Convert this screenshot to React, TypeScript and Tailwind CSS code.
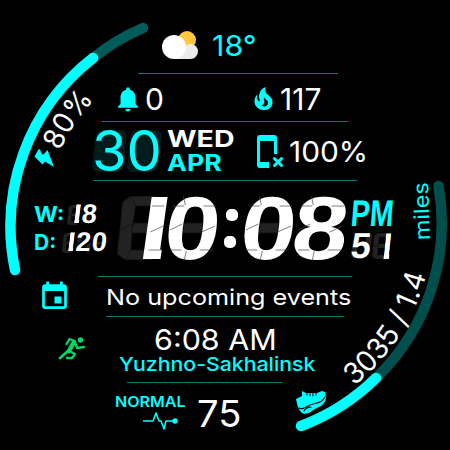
import type { ReactNode } from 'react'
import { MdEvent, MdNotifications } from 'react-icons/md'

// polygons of one display cell, on a 54x64 grid
const segments: Record<string, string> = {
  a: '14,0 43,0 40,10 17,10',
  b: '43,0 54,6 51,31 36,37 39,10',
  c: '36,37 51,31 48,57 38,64 33,54',
  d: '8,54 34,54 37,64 9,64',
  e: '3,34 17,28 15,54 9,64 0,58',
  f: '6,6 15,0 20,10 17,28 3,34',
  g: '18,27 37,27 36,37 16,37',
}

function Cell({ digit, off, className, text, lines }: { digit: string; off: string; className: string; text: string; lines?: boolean }) {
  return (
    <span className={`relative flex shrink-0 items-center justify-center ${className}`}>
      <svg className="absolute inset-0 h-full w-full" viewBox="0 0 54 64" preserveAspectRatio="none">
        {off.split('').map(s => <polygon key={s} points={segments[s]} fill="#222" stroke="#111" strokeWidth="0.8" />)}
      </svg>
      <span className={`relative leading-none font-bold ${text}`}>{digit}</span>
      {lines && (
        <svg className="absolute inset-0 h-full w-full" viewBox="0 0 54 64" preserveAspectRatio="none" fill="none" stroke="#444" strokeWidth="0.7">
          {digit !== '1' && <path d="M17 0l2 9M3 34l13-6M3 54h12M18 64l2-9M6 10h12" />}
          <path d="M38 10h13M36 36l14-6M34 54h14" />
        </svg>
      )}
    </span>
  )
}

function Row({ className, children }: { className: string; children: ReactNode }) {
  return <div className={`flex shrink-0 ${className}`}>{children}</div>
}

function Rule({ className }: { className: string }) {
  return <div className={`h-px shrink-0 bg-[#007c7c] ${className}`} />
}

function Flame() {
  return (
    <svg width="31" height="31" viewBox="0 0 24 24" className="shrink-0 fill-[#0ff]">
      <path d="M17.66 11.2c-.23-.3-.51-.56-.77-.82-.67-.6-1.43-1.03-2.070-1.660C13.330 7.260 13 4.850 13.950 3c-.95.23-1.780.75-2.490 1.320-2.590 2.080-3.610 5.750-2.390 8.900.04.1.08.2.08.33 0 .22-.15.42-.35.5-.23.1-.47.04-.66-.12a.58.58 0 0 1-.14-.17c-1.130-1.430-1.310-3.480-.55-5.120C5.780 10 4.870 12.300 5 14.470c.06.5.12 1 .29 1.500.14.6.41 1.200.71 1.730 1.080 1.730 2.950 2.970 4.960 3.220 2.140.27 4.430-.12 6.070-1.600 1.830-1.660 2.470-4.320 1.530-6.600l-.13-.26c-.21-.46-.77-1.260-.77-1.260m-3.160 6.300c-.28.24-.74.5-1.100.6-1.120.4-2.240-.16-2.900-.82 1.190-.28 1.900-1.160 2.110-2.050.17-.8-.15-1.460-.28-2.230-.12-.74-.1-1.370.17-2.060.19.38.39.76.63 1.060.77 1 1.980 1.440 2.240 2.800.04.14.06.28.06.43.03.82-.33 1.720-.93 2.270" />
    </svg>
  )
}

function Rings() {
  return (
    <svg className="pointer-events-none absolute inset-0" width="450" height="450" fill="none" strokeWidth="10.5" strokeLinecap="round">
      <path d="M93 58A213.5 213.5 0 0 1 143 28" stroke="#005c5a" />
      <path d="M15 270A213.5 213.5 0 0 1 93 58" stroke="#0ff" />
      <path d="M438.5 186A215.5 215.5 0 0 1 376 378" stroke="#004f4d" />
      <path d="M376 378A215.5 215.5 0 0 1 301 426" stroke="#0ff" />
      <path id="battery" d="M60 151A182 182 0 0 1 115 81" />
      <path id="steps" d="M354 386A207 207 0 0 0 432 240" />
      <g stroke="none" fontFamily="Inter, sans-serif" fill="#fff">
        <text fontSize="29"><textPath href="#battery" textLength="62" lengthAdjust="spacingAndGlyphs">80%</textPath></text>
        <text fontSize="29"><textPath href="#steps" textLength="135" lengthAdjust="spacingAndGlyphs">3035 / 1.4</textPath></text>
        <text transform="translate(430 240) rotate(-92)" fontSize="21" fill="#0ff" textLength="58" lengthAdjust="spacingAndGlyphs">miles</text>
      </g>
      <path d="M39 148.500l3.500 6 1.500-.5 3.500-4L54 167l-9-5.500-2.500 3-8-8z" fill="#0ff" stroke="none" />
      <g transform="translate(296 389)" stroke="none">
        <path d="M6 2l4 2 11 0 5-2 3 1 1 6c-1 9-10 9-14 13-4 3-9 4-11 1-3-3-4-8-5-13l6-3z" fill="#0ff" />
        <path d="M3 19c3 2 6 0 9-2 6-4 13-1 17-9M8 22c2-3 4-4 7-4" stroke="#000" strokeWidth="1.1" />
        <path d="M11 2v4m3-3v4m3-4v4m3-5v4" stroke="#000" strokeWidth="1" />
      </g>
    </svg>
  )
}

// keeps only the upright stem of the 1, as the display shows it
const one = '-skew-x-6 [clip-path:polygon(43%_0,69%_0,69%_100%,43%_100%)]'

export default function App() {
  return (
    <main className="relative flex h-[450px] w-[450px] flex-col overflow-hidden bg-black font-[Inter,sans-serif] leading-none text-white">
      <Row className="h-[73px] pt-[31px] pl-[161px]">
        <svg width="38" height="30" className="shrink-0">
          <circle cx="26" cy="9" r="9" fill="#ffc83d" />
          <circle cx="29.500" cy="20.500" r="7.500" fill="#ececec" />
          <path d="M13 18h16v10H13z" fill="#ececec" />
          <circle cx="13" cy="16" r="12" fill="#fff" />
        </svg>
        <span className="ml-[13px] h-max w-max origin-left scale-x-[1.05] text-[29px] text-[#0ff]">18°</span>
      </Row>
      <Rule className="ml-[138px] w-[200px]" />

      <Row className="h-[47px] items-center pt-[2px] pl-[113px]">
        <MdNotifications size={30} className="shrink-0 text-[#0ff]" />
        <span className="ml-[2px] w-[103px] text-[30px]">0</span>
        <Flame />
        <span className="ml-px text-[30px]">117</span>
      </Row>
      <Rule className="ml-[102px] w-[246px]" />

      <Row className="h-[58px] pl-[92px]">
        <span className="relative w-[75px] shrink-0 pt-px">
          <span className="absolute top-2 left-0.5 flex gap-1">
            <i className="h-[42px] w-[31px] -skew-x-6 rounded-md bg-[#001c1c]" />
            <i className="h-[42px] w-[31px] -skew-x-6 rounded-md bg-[#001c1c]" />
          </span>
          <span className="relative inline-block text-[56px] text-[#0ff]">30</span>
        </span>
        <span className="flex w-[88px] shrink-0 flex-col gap-px pt-[6px] text-[23px] font-bold">
          <span className="w-max origin-left scale-x-[1.24]">WED</span>
          <span className="w-max origin-left scale-x-[1.16] text-[#0ff]">APR</span>
        </span>
        <svg width="32" height="36" className="mt-3 shrink-0">
          <path d="M3.500 28V5M20.500 5V20" stroke="#0ff" strokeWidth="3" />
          <path d="M2 4a3 3 0 0 1 3-3h14a3 3 0 0 1 3 3v3H2zM2 28h12v6H5a3 3 0 0 1-3-3z" fill="#0ff" />
          <path d="M19.500 24.500l7 7M26.500 24.500l-7 7" stroke="#0ff" strokeWidth="3" strokeLinecap="round" />
        </svg>
        <span className="mt-[15px] ml-[2px] w-max origin-left scale-x-[1.03] text-[29px]">100%</span>
      </Row>
      <Rule className="ml-[93px] w-[264px]" />

      <Row className="h-[95px] pl-[34px]">
        <div className="mt-[23px] flex w-[83px] shrink-0 flex-col gap-[7px] text-[21px] font-bold text-[#0ff]">
          <div className="flex h-[21px] items-center">
            <span className="w-[33px]"><span className="inline-block origin-left scale-x-[1.1]">W:</span></span>
            <div className="flex font-['Liberation_Sans'] text-white">
              <Cell digit="1" off="adefg" className="h-5 w-[15px]" text={`${one} translate-x-[2px] scale-x-[1.2] text-[27px]`} />
              <Cell digit="8" off="" className="h-5 w-[16px]" text="-skew-x-6 text-[27px]" />
            </div>
          </div>
          <div className="flex h-[21px] items-center">
            <span className="w-[28px]">D:</span>
            <div className="flex font-['Liberation_Sans'] text-white">
              <Cell digit="1" off="adefg" className="h-5 w-[14px]" text={`${one} translate-x-[2px] scale-x-[1.2] text-[27px]`} />
              <Cell digit="2" off="cf" className="h-5 w-[16px]" text="-skew-x-6 text-[27px]" />
              <Cell digit="0" off="g" className="h-5 w-[16px]" text="-skew-x-6 text-[27px]" />
            </div>
          </div>
        </div>
        <div className="mt-[15px] flex h-16 w-[234px] shrink-0 font-['Liberation_Sans']">
          <Cell digit="1" off="adefg" className="w-[50px]" text={`${one} translate-x-[10px] scale-x-[1.35] text-[90px]`} lines />
          <Cell digit="0" off="g" className="w-[52px]" text="-skew-x-6 text-[89px] scale-x-[1.12]" lines />
          <span className="flex w-[24px] flex-col items-center justify-center gap-[15px]">
            <i className="size-[12px] translate-x-px rounded-[5px] bg-white" />
            <i className="size-[12px] -translate-x-px rounded-[5px] bg-white" />
          </span>
          <Cell digit="0" off="g" className="w-[52px]" text="-skew-x-6 text-[89px] scale-x-[1.12]" lines />
          <Cell digit="8" off="" className="w-[52px]" text="-skew-x-6 text-[89px] scale-x-[1.12]" lines />
        </div>
        <div className="mt-[14px] flex flex-col">
          <span className="h-[38px] w-max origin-left -skew-x-6 scale-x-[0.77] font-['Liberation_Sans'] text-[37px] font-bold text-[#0ff]">PM</span>
          <div className="flex font-['Liberation_Sans']">
            <Cell digit="5" off="be" className="h-[26px] w-[21px]" text="-skew-x-6 text-[36px]" />
            <Cell digit="1" off="adefg" className="h-[26px] w-[20px]" text={`${one} translate-x-[4px] text-[37px]`} />
          </div>
        </div>
      </Row>
      <Rule className="ml-[98px] w-[254px]" />

      <Row className="h-[39px] pl-[38px]">
        <MdEvent size={33} className="mt-[3px] mr-[35px] shrink-0 text-[#0ff]" />
        <span className="mt-[9px] w-max origin-left scale-x-[1.145] text-[22px] whitespace-nowrap">No upcoming events</span>
      </Row>
      <Rule className="ml-[106px] w-[238px]" />

      <Row className="h-[65px] pl-[57px]">
        <svg width="30" height="27" className="mt-[18px] shrink-0 fill-none stroke-[#00d768]" strokeWidth="2.300" strokeLinecap="round" strokeLinejoin="round">
          <circle cx="23.500" cy="5" r="2.700" className="fill-[#00d768] stroke-none" />
          <path d="M9.500 9l3-5 5 2M18 7l2 6 7-1M12 16l6 3-3 4-5 0" />
          <path d="M17 7l-5 9" strokeWidth="4.500" />
          <path d="M12 15l-9 8" strokeWidth="2.800" />
        </svg>
        <div className="flex flex-col pt-2">
          <span className="ml-[67px] w-max origin-left scale-x-[1.05] text-[29px] whitespace-nowrap">6:08 AM</span>
          <span className="mt-px ml-8 w-max origin-left scale-x-[1.12] text-[19px] font-medium whitespace-nowrap text-[#0ff]">Yuzhno-Sakhalinsk</span>
        </div>
      </Row>
      <Rule className="ml-[127px] w-[155px]" />

      <Row className="h-[67px] pl-[115px]">
        <div className="w-[82px] pt-[11px]">
          <span className="block w-max origin-left scale-x-[1.07] text-[15px] font-semibold text-[#0ff]">NORMAL</span>
          <svg width="38" height="22" className="mt-[2px] ml-7 fill-none stroke-[#0ff]" strokeWidth="1.500" strokeLinejoin="round">
            <path d="M0 10h10l3-8 3 8h2l3 8 2-8h8" />
            <circle cx="32" cy="10" r="2.700" className="fill-[#0ff] stroke-none" />
          </svg>
        </div>
        <span className="w-max origin-left scale-x-[1.03] pt-[12px] text-[37px]">75</span>
      </Row>
      <Rings />
    </main>
  )
}
